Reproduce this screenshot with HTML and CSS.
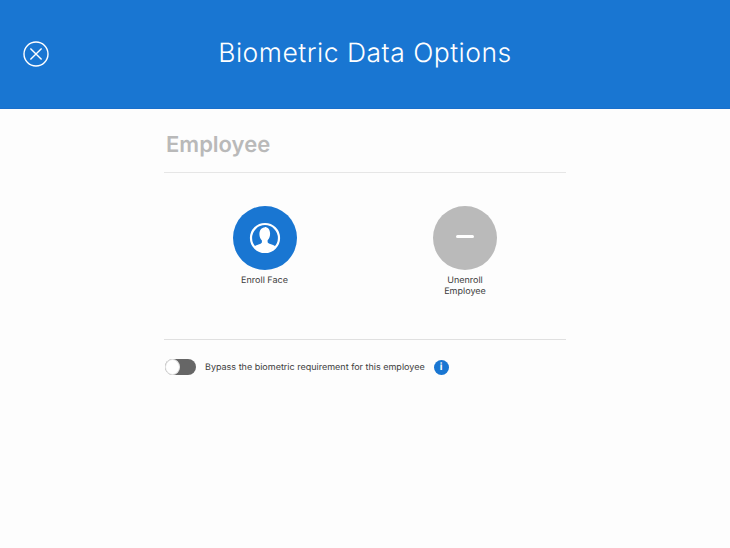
FILE: index.html
```html
<!DOCTYPE html>
<html lang="en">
<head>
<meta charset="utf-8">
<title>Biometric Data Options</title>
<link rel="stylesheet" href="styles.css">
</head>
<body>
<header class="header">
  <button class="close" aria-label="Close">
    <svg width="26" height="26" viewBox="0 0 26 26" fill="none" stroke="#fff" stroke-width="1.400">
      <circle cx="13" cy="13" r="12"/>
      <path d="M7.400 7.400 18.600 18.600M18.600 7.400 7.400 18.600"/>
    </svg>
  </button>
  <h1 class="title">Biometric Data Options</h1>
</header>
<main class="content">
  <h2 class="section">Employee</h2>
  <div class="actions">
    <div class="action">
      <div class="disc disc-blue">
        <svg class="face" width="32" height="32" viewBox="0 0 32 32">
          <circle cx="16" cy="16" r="14" fill="none" stroke="#fff" stroke-width="2.200"/>
          <path fill="#fff" d="M16 5.400c-3.500 0-5.600 2.700-5.600 6.600 0 2.700 1 5 2.500 6.500v1.600c0 .8-.5 1.300-1.300 1.600l-4.200 1.500c-1.100.4-1.900 1-2.300 1.900A13.300 13.300 0 0 0 16 29.300c4 0 7.900-1.800 10.400-4.500-.4-.9-1.200-1.500-2.300-1.900l-4.200-1.500c-.8-.3-1.300-.8-1.300-1.600v-1.600c1.500-1.500 2.500-3.800 2.500-6.500 0-3.900-2.100-6.600-5.600-6.600z"/>
        </svg>
      </div>
      <div class="label">Enroll Face</div>
    </div>
    <div class="action">
      <div class="disc disc-grey"><span class="minus"></span></div>
      <div class="label">Unenroll<br>Employee</div>
    </div>
  </div>
  <div class="bypass">
    <span class="toggle"><span class="knob"></span></span>
    <span class="bypass-text">Bypass the biometric requirement for this employee</span>
    <span class="info">i</span>
  </div>
</main>
</body>
</html>
```
FILE: styles.css
```css
* { box-sizing: border-box; }
html, body { margin: 0; height: 100%; }
body {
  background: #fdfdfd;
  font-family: Inter, "Liberation Sans", sans-serif;
  overflow: hidden;
  text-rendering: geometricPrecision;
}
.header {
  height: 109px;
  background: #1976d2;
  border-bottom: 1px solid #1a6fcb;
  display: flex;
  align-items: center;
  justify-content: center;
  position: relative;
}
.close {
  position: absolute;
  left: 23px;
  top: 41px;
  width: 26px;
  height: 26px;
  padding: 0;
  border: 0;
  background: none;
  display: block;
}
.close svg { display: block; }
.title {
  margin: 0 0 3px;
  color: #fff;
  font-size: 26.500px;
  font-weight: 300;
  letter-spacing: 0.5px;
}
.content {
  width: 402px;
  margin-left: 164px;
}
.section {
  margin: 0;
  height: 64px;
  padding: 22px 0 0 2px;
  border-bottom: 1px solid #e6e6e6;
  color: #b9b9b9;
  font-size: 22px;
  font-weight: 600;
  line-height: 28px;
}
.actions {
  height: 167px;
  border-bottom: 1px solid #e0e0e0;
  display: grid;
  grid-template-columns: 201px 200px;
  padding-top: 33px;
}
.action {
  display: flex;
  flex-direction: column;
  align-items: center;
}
.disc {
  width: 64px;
  height: 64px;
  border-radius: 50%;
  display: flex;
  align-items: center;
  justify-content: center;
}
.disc-blue { background: #1976d2; }
.disc-grey { background: #bababa; }
.minus {
  width: 18px;
  height: 3px;
  margin-bottom: 3px;
  border-radius: 1.500px;
  background: #fff;
}
.label {
  margin-top: 5px;
  color: #3c3c3c;
  font-size: 9px;
  line-height: 11px;
  text-align: center;
}
.bypass {
  display: flex;
  align-items: center;
  margin-top: 19px;
}
.toggle {
  width: 31px;
  height: 16px;
  margin-left: 1px;
  border-radius: 8px;
  background: #666;
  position: relative;
  flex: none;
}
.knob {
  position: absolute;
  left: 0;
  top: 0;
  width: 15px;
  height: 16px;
  border-radius: 50%;
  background: #fff;
  border: 1px solid #e4e4e4;
}
.bypass-text {
  margin-left: 9px;
  color: #3c3c3c;
  font-size: 9px;
}
.info {
  margin-left: 9px;
  width: 15px;
  height: 15px;
  border-radius: 50%;
  background: #1976d2;
  color: #fff;
  font-size: 10px;
  font-weight: 700;
  line-height: 15px;
  text-align: center;
}
```
